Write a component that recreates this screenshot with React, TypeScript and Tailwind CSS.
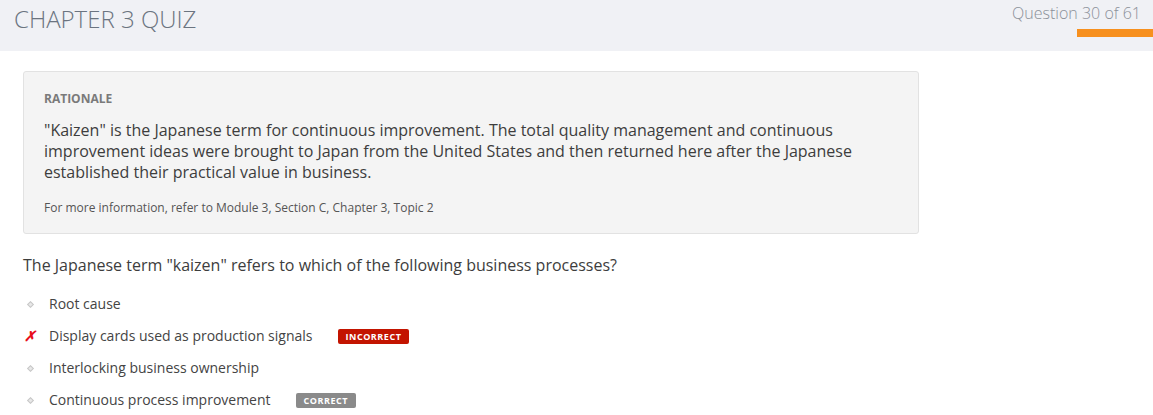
const options = [
  { text: "Root cause", mark: "none" },
  { text: "Display cards used as production signals", mark: "wrong", badge: "INCORRECT" },
  { text: "Interlocking business ownership", mark: "none" },
  { text: "Continuous process improvement", mark: "none", badge: "CORRECT" },
];

export default function App() {
  return (
    <main className="min-h-[415px] bg-white font-['Open_Sans',sans-serif] text-[#444]">
      <header className="flex h-[51px] items-start justify-between bg-[#f0f1f5]">
        <h1 className="pl-[14px] pt-[3px] text-[24px] font-light leading-[32px] text-[#6b7480]">
          CHAPTER 3 QUIZ
        </h1>
        <div className="flex flex-col items-end">
          <span className="pr-[12px] pt-[2px] text-[16px] font-light leading-[22px] text-[#8b9099]">
            Question 30 of 61
          </span>
          <div className="mt-[5px] h-[8px] w-[76px] bg-[#f7901e]" />
        </div>
      </header>

      <section className="px-[23px] pt-[20px]">
        <div className="w-[896px] rounded-[3px] border border-[#e2e2e2] bg-[#f4f4f4] px-[20px] pb-[17px] pt-[18px]">
          <h2 className="text-[12px] font-bold leading-[18px] text-[#7a7a7a]">RATIONALE</h2>
          <p className="mt-[12px] text-[16px] leading-[21px] text-[#3d3d3d]">
            "Kaizen" is the Japanese term for continuous improvement. The total quality management and continuous
            improvement ideas were brought to Japan from the United States and then returned here after the Japanese
            established their practical value in business.
          </p>
          <p className="mt-[16px] text-[12px] leading-[17px] text-[#555]">
            For more information, refer to Module 3, Section C, Chapter 3, Topic 2
          </p>
        </div>

        <p className="mt-[20px] text-[16px] leading-[22px] text-[#3d3d3d]">
          The Japanese term "kaizen" refers to which of the following business processes?
        </p>

        <ul className="mt-[12px] flex flex-col">
          {options.map((o) => (
            <li key={o.text} className="flex h-[32px] items-center">
              <span className="flex w-[26px] justify-center pr-[12px]">
                {o.mark === "wrong" ? (
                  <span className="text-[14px] font-bold italic leading-none text-[#e8101b]">✗</span>
                ) : (
                  <span className="h-[5px] w-[5px] rotate-45 border border-[#c8c8c8] bg-[#e8e8e8]" />
                )}
              </span>
              <span className="text-[14px] leading-[20px] text-[#444]">{o.text}</span>
              {o.badge && (
                <span
                  className={
                    o.badge === "INCORRECT"
                      ? "ml-[25px] rounded-[2px] bg-[#c31400] px-[8px] text-[9px] font-bold leading-[15px] tracking-[0.06em] text-white"
                      : "ml-[25px] rounded-[2px] bg-[#8a8a8a] px-[8px] text-[9px] font-bold leading-[15px] tracking-[0.06em] text-white"
                  }
                >
                  {o.badge}
                </span>
              )}
            </li>
          ))}
        </ul>
      </section>
    </main>
  );
}
